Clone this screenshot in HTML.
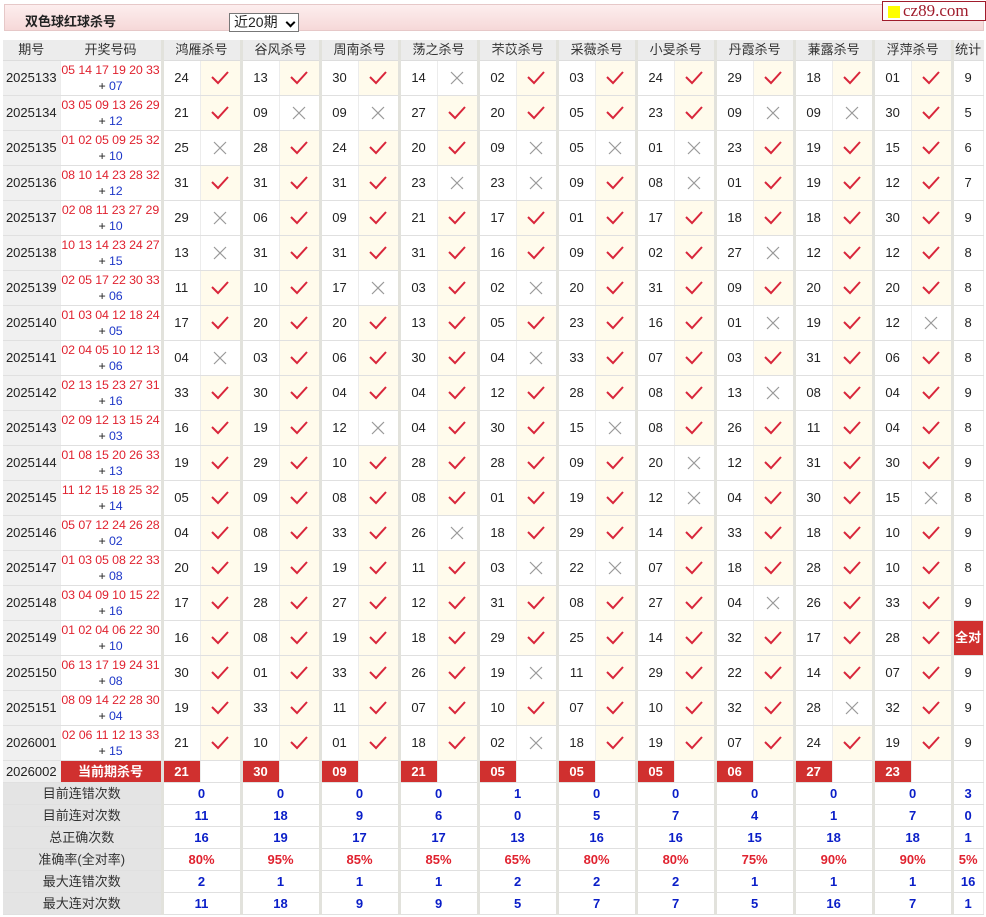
<!DOCTYPE html>
<html><head><meta charset="utf-8">
<style>
body{margin:0;background:#fff;font-family:"Liberation Sans","Noto Sans CJK SC",sans-serif;font-size:13px;color:#222;width:986px;height:917px;overflow:hidden;position:relative}
.bar{position:absolute;left:4px;top:4px;width:980px;height:27px;background:linear-gradient(#fdeeee,#f6d8d8);border:1px solid #e6c8c8;box-sizing:border-box}
.bar b{position:absolute;left:20px;top:6px;font-size:13px}
.sel{position:absolute;left:224px;top:8px;width:70px;height:19px;border:1px solid #777;background:#fff;box-sizing:border-box;font-size:14px;line-height:17px;padding-left:4px}
.sel i{position:absolute;right:4px;top:5px;width:5px;height:5px;border-right:2px solid #000;border-bottom:2px solid #000;transform:rotate(45deg)}
.logo{position:absolute;left:882px;top:1px;width:104px;height:20px;border:1px solid #a01c2c;box-sizing:border-box;background:#fff;font-family:"Liberation Serif",serif;font-size:17px;color:#a01c2c;line-height:18px;padding-left:20px}
.logo i{position:absolute;left:5px;top:4px;width:12px;height:12px;background:#ffff00}
table{position:absolute;left:3px;top:40px;border-collapse:collapse;table-layout:fixed;width:980px}
td{padding:0;text-align:center;border-bottom:1px solid #e0e0e0;border-right:1px solid #ececec;height:34px;line-height:16px;overflow:hidden;white-space:nowrap}
tr.h td{height:20px;background:#ececec;color:#333;border-bottom:1px solid #ddd}
td.n{border-left:3px solid #e2e2dc}
td.q{background:#f0f0f0}
td.k{color:#e0222f;font-size:12.4px;letter-spacing:-0.1px}
td.k span{color:#1c36c8}
td.y{background:#fffbec}
svg{display:block;margin:auto}
tr.c td{height:21px;font-weight:bold}
td.r{background:#d0302f;color:#fff;font-weight:bold}
tr.s td{height:21px;font-weight:bold;color:#0a1ec8}
tr.s td.l{background:#e4e4e4;color:#333;font-weight:normal}
tr.s td.p{color:#e0222f}
td.all{background:#d0302f;color:#fff;font-weight:bold}
</style></head><body>
<svg width="0" height="0" style="position:absolute"><defs>
<symbol id="c" viewBox="0 0 18 14"><path d="M1 6 L7 12 L17 1" fill="none" stroke="#d9263b" stroke-width="2"/></symbol>
<symbol id="x" viewBox="0 0 14 14"><path d="M1 1 L13 13 M13 1 L1 13" fill="none" stroke="#999" stroke-width="1.2"/></symbol>
</defs></svg>
<div class="bar"><b>双色球红球杀号</b><div class="sel">近20期<i></i></div></div>
<div class="logo"><i></i>cz89.com</div>
<table>
<colgroup><col style="width:57px"><col style="width:102px">
<col style="width:38px"><col style="width:41px"><col style="width:38px"><col style="width:41px"><col style="width:38px"><col style="width:41px"><col style="width:38px"><col style="width:41px"><col style="width:38px"><col style="width:41px"><col style="width:38px"><col style="width:41px"><col style="width:38px"><col style="width:41px"><col style="width:38px"><col style="width:41px"><col style="width:38px"><col style="width:41px"><col style="width:38px"><col style="width:41px"><col style="width:31px"></colgroup>
<tr class="h"><td>期号</td><td>开奖号码</td><td class="n" colspan="2">鸿雁杀号</td><td class="n" colspan="2">谷风杀号</td><td class="n" colspan="2">周南杀号</td><td class="n" colspan="2">荡之杀号</td><td class="n" colspan="2">芣苡杀号</td><td class="n" colspan="2">采薇杀号</td><td class="n" colspan="2">小旻杀号</td><td class="n" colspan="2">丹霞杀号</td><td class="n" colspan="2">蒹露杀号</td><td class="n" colspan="2">浮萍杀号</td><td class="n">统计</td></tr>
<tr><td class="q">2025133</td><td class="k">05 14 17 19 20 33<br><span style="color:#222">+</span> <span>07</span></td><td class="n">24</td><td class="y"><svg width="18" height="14"><use href="#c"/></svg></td><td class="n">13</td><td class="y"><svg width="18" height="14"><use href="#c"/></svg></td><td class="n">30</td><td class="y"><svg width="18" height="14"><use href="#c"/></svg></td><td class="n">14</td><td><svg width="14" height="14"><use href="#x"/></svg></td><td class="n">02</td><td class="y"><svg width="18" height="14"><use href="#c"/></svg></td><td class="n">03</td><td class="y"><svg width="18" height="14"><use href="#c"/></svg></td><td class="n">24</td><td class="y"><svg width="18" height="14"><use href="#c"/></svg></td><td class="n">29</td><td class="y"><svg width="18" height="14"><use href="#c"/></svg></td><td class="n">18</td><td class="y"><svg width="18" height="14"><use href="#c"/></svg></td><td class="n">01</td><td class="y"><svg width="18" height="14"><use href="#c"/></svg></td><td class="n">9</td></tr>
<tr><td class="q">2025134</td><td class="k">03 05 09 13 26 29<br><span style="color:#222">+</span> <span>12</span></td><td class="n">21</td><td class="y"><svg width="18" height="14"><use href="#c"/></svg></td><td class="n">09</td><td><svg width="14" height="14"><use href="#x"/></svg></td><td class="n">09</td><td><svg width="14" height="14"><use href="#x"/></svg></td><td class="n">27</td><td class="y"><svg width="18" height="14"><use href="#c"/></svg></td><td class="n">20</td><td class="y"><svg width="18" height="14"><use href="#c"/></svg></td><td class="n">05</td><td class="y"><svg width="18" height="14"><use href="#c"/></svg></td><td class="n">23</td><td class="y"><svg width="18" height="14"><use href="#c"/></svg></td><td class="n">09</td><td><svg width="14" height="14"><use href="#x"/></svg></td><td class="n">09</td><td><svg width="14" height="14"><use href="#x"/></svg></td><td class="n">30</td><td class="y"><svg width="18" height="14"><use href="#c"/></svg></td><td class="n">5</td></tr>
<tr><td class="q">2025135</td><td class="k">01 02 05 09 25 32<br><span style="color:#222">+</span> <span>10</span></td><td class="n">25</td><td><svg width="14" height="14"><use href="#x"/></svg></td><td class="n">28</td><td class="y"><svg width="18" height="14"><use href="#c"/></svg></td><td class="n">24</td><td class="y"><svg width="18" height="14"><use href="#c"/></svg></td><td class="n">20</td><td class="y"><svg width="18" height="14"><use href="#c"/></svg></td><td class="n">09</td><td><svg width="14" height="14"><use href="#x"/></svg></td><td class="n">05</td><td><svg width="14" height="14"><use href="#x"/></svg></td><td class="n">01</td><td><svg width="14" height="14"><use href="#x"/></svg></td><td class="n">23</td><td class="y"><svg width="18" height="14"><use href="#c"/></svg></td><td class="n">19</td><td class="y"><svg width="18" height="14"><use href="#c"/></svg></td><td class="n">15</td><td class="y"><svg width="18" height="14"><use href="#c"/></svg></td><td class="n">6</td></tr>
<tr><td class="q">2025136</td><td class="k">08 10 14 23 28 32<br><span style="color:#222">+</span> <span>12</span></td><td class="n">31</td><td class="y"><svg width="18" height="14"><use href="#c"/></svg></td><td class="n">31</td><td class="y"><svg width="18" height="14"><use href="#c"/></svg></td><td class="n">31</td><td class="y"><svg width="18" height="14"><use href="#c"/></svg></td><td class="n">23</td><td><svg width="14" height="14"><use href="#x"/></svg></td><td class="n">23</td><td><svg width="14" height="14"><use href="#x"/></svg></td><td class="n">09</td><td class="y"><svg width="18" height="14"><use href="#c"/></svg></td><td class="n">08</td><td><svg width="14" height="14"><use href="#x"/></svg></td><td class="n">01</td><td class="y"><svg width="18" height="14"><use href="#c"/></svg></td><td class="n">19</td><td class="y"><svg width="18" height="14"><use href="#c"/></svg></td><td class="n">12</td><td class="y"><svg width="18" height="14"><use href="#c"/></svg></td><td class="n">7</td></tr>
<tr><td class="q">2025137</td><td class="k">02 08 11 23 27 29<br><span style="color:#222">+</span> <span>10</span></td><td class="n">29</td><td><svg width="14" height="14"><use href="#x"/></svg></td><td class="n">06</td><td class="y"><svg width="18" height="14"><use href="#c"/></svg></td><td class="n">09</td><td class="y"><svg width="18" height="14"><use href="#c"/></svg></td><td class="n">21</td><td class="y"><svg width="18" height="14"><use href="#c"/></svg></td><td class="n">17</td><td class="y"><svg width="18" height="14"><use href="#c"/></svg></td><td class="n">01</td><td class="y"><svg width="18" height="14"><use href="#c"/></svg></td><td class="n">17</td><td class="y"><svg width="18" height="14"><use href="#c"/></svg></td><td class="n">18</td><td class="y"><svg width="18" height="14"><use href="#c"/></svg></td><td class="n">18</td><td class="y"><svg width="18" height="14"><use href="#c"/></svg></td><td class="n">30</td><td class="y"><svg width="18" height="14"><use href="#c"/></svg></td><td class="n">9</td></tr>
<tr><td class="q">2025138</td><td class="k">10 13 14 23 24 27<br><span style="color:#222">+</span> <span>15</span></td><td class="n">13</td><td><svg width="14" height="14"><use href="#x"/></svg></td><td class="n">31</td><td class="y"><svg width="18" height="14"><use href="#c"/></svg></td><td class="n">31</td><td class="y"><svg width="18" height="14"><use href="#c"/></svg></td><td class="n">31</td><td class="y"><svg width="18" height="14"><use href="#c"/></svg></td><td class="n">16</td><td class="y"><svg width="18" height="14"><use href="#c"/></svg></td><td class="n">09</td><td class="y"><svg width="18" height="14"><use href="#c"/></svg></td><td class="n">02</td><td class="y"><svg width="18" height="14"><use href="#c"/></svg></td><td class="n">27</td><td><svg width="14" height="14"><use href="#x"/></svg></td><td class="n">12</td><td class="y"><svg width="18" height="14"><use href="#c"/></svg></td><td class="n">12</td><td class="y"><svg width="18" height="14"><use href="#c"/></svg></td><td class="n">8</td></tr>
<tr><td class="q">2025139</td><td class="k">02 05 17 22 30 33<br><span style="color:#222">+</span> <span>06</span></td><td class="n">11</td><td class="y"><svg width="18" height="14"><use href="#c"/></svg></td><td class="n">10</td><td class="y"><svg width="18" height="14"><use href="#c"/></svg></td><td class="n">17</td><td><svg width="14" height="14"><use href="#x"/></svg></td><td class="n">03</td><td class="y"><svg width="18" height="14"><use href="#c"/></svg></td><td class="n">02</td><td><svg width="14" height="14"><use href="#x"/></svg></td><td class="n">20</td><td class="y"><svg width="18" height="14"><use href="#c"/></svg></td><td class="n">31</td><td class="y"><svg width="18" height="14"><use href="#c"/></svg></td><td class="n">09</td><td class="y"><svg width="18" height="14"><use href="#c"/></svg></td><td class="n">20</td><td class="y"><svg width="18" height="14"><use href="#c"/></svg></td><td class="n">20</td><td class="y"><svg width="18" height="14"><use href="#c"/></svg></td><td class="n">8</td></tr>
<tr><td class="q">2025140</td><td class="k">01 03 04 12 18 24<br><span style="color:#222">+</span> <span>05</span></td><td class="n">17</td><td class="y"><svg width="18" height="14"><use href="#c"/></svg></td><td class="n">20</td><td class="y"><svg width="18" height="14"><use href="#c"/></svg></td><td class="n">20</td><td class="y"><svg width="18" height="14"><use href="#c"/></svg></td><td class="n">13</td><td class="y"><svg width="18" height="14"><use href="#c"/></svg></td><td class="n">05</td><td class="y"><svg width="18" height="14"><use href="#c"/></svg></td><td class="n">23</td><td class="y"><svg width="18" height="14"><use href="#c"/></svg></td><td class="n">16</td><td class="y"><svg width="18" height="14"><use href="#c"/></svg></td><td class="n">01</td><td><svg width="14" height="14"><use href="#x"/></svg></td><td class="n">19</td><td class="y"><svg width="18" height="14"><use href="#c"/></svg></td><td class="n">12</td><td><svg width="14" height="14"><use href="#x"/></svg></td><td class="n">8</td></tr>
<tr><td class="q">2025141</td><td class="k">02 04 05 10 12 13<br><span style="color:#222">+</span> <span>06</span></td><td class="n">04</td><td><svg width="14" height="14"><use href="#x"/></svg></td><td class="n">03</td><td class="y"><svg width="18" height="14"><use href="#c"/></svg></td><td class="n">06</td><td class="y"><svg width="18" height="14"><use href="#c"/></svg></td><td class="n">30</td><td class="y"><svg width="18" height="14"><use href="#c"/></svg></td><td class="n">04</td><td><svg width="14" height="14"><use href="#x"/></svg></td><td class="n">33</td><td class="y"><svg width="18" height="14"><use href="#c"/></svg></td><td class="n">07</td><td class="y"><svg width="18" height="14"><use href="#c"/></svg></td><td class="n">03</td><td class="y"><svg width="18" height="14"><use href="#c"/></svg></td><td class="n">31</td><td class="y"><svg width="18" height="14"><use href="#c"/></svg></td><td class="n">06</td><td class="y"><svg width="18" height="14"><use href="#c"/></svg></td><td class="n">8</td></tr>
<tr><td class="q">2025142</td><td class="k">02 13 15 23 27 31<br><span style="color:#222">+</span> <span>16</span></td><td class="n">33</td><td class="y"><svg width="18" height="14"><use href="#c"/></svg></td><td class="n">30</td><td class="y"><svg width="18" height="14"><use href="#c"/></svg></td><td class="n">04</td><td class="y"><svg width="18" height="14"><use href="#c"/></svg></td><td class="n">04</td><td class="y"><svg width="18" height="14"><use href="#c"/></svg></td><td class="n">12</td><td class="y"><svg width="18" height="14"><use href="#c"/></svg></td><td class="n">28</td><td class="y"><svg width="18" height="14"><use href="#c"/></svg></td><td class="n">08</td><td class="y"><svg width="18" height="14"><use href="#c"/></svg></td><td class="n">13</td><td><svg width="14" height="14"><use href="#x"/></svg></td><td class="n">08</td><td class="y"><svg width="18" height="14"><use href="#c"/></svg></td><td class="n">04</td><td class="y"><svg width="18" height="14"><use href="#c"/></svg></td><td class="n">9</td></tr>
<tr><td class="q">2025143</td><td class="k">02 09 12 13 15 24<br><span style="color:#222">+</span> <span>03</span></td><td class="n">16</td><td class="y"><svg width="18" height="14"><use href="#c"/></svg></td><td class="n">19</td><td class="y"><svg width="18" height="14"><use href="#c"/></svg></td><td class="n">12</td><td><svg width="14" height="14"><use href="#x"/></svg></td><td class="n">04</td><td class="y"><svg width="18" height="14"><use href="#c"/></svg></td><td class="n">30</td><td class="y"><svg width="18" height="14"><use href="#c"/></svg></td><td class="n">15</td><td><svg width="14" height="14"><use href="#x"/></svg></td><td class="n">08</td><td class="y"><svg width="18" height="14"><use href="#c"/></svg></td><td class="n">26</td><td class="y"><svg width="18" height="14"><use href="#c"/></svg></td><td class="n">11</td><td class="y"><svg width="18" height="14"><use href="#c"/></svg></td><td class="n">04</td><td class="y"><svg width="18" height="14"><use href="#c"/></svg></td><td class="n">8</td></tr>
<tr><td class="q">2025144</td><td class="k">01 08 15 20 26 33<br><span style="color:#222">+</span> <span>13</span></td><td class="n">19</td><td class="y"><svg width="18" height="14"><use href="#c"/></svg></td><td class="n">29</td><td class="y"><svg width="18" height="14"><use href="#c"/></svg></td><td class="n">10</td><td class="y"><svg width="18" height="14"><use href="#c"/></svg></td><td class="n">28</td><td class="y"><svg width="18" height="14"><use href="#c"/></svg></td><td class="n">28</td><td class="y"><svg width="18" height="14"><use href="#c"/></svg></td><td class="n">09</td><td class="y"><svg width="18" height="14"><use href="#c"/></svg></td><td class="n">20</td><td><svg width="14" height="14"><use href="#x"/></svg></td><td class="n">12</td><td class="y"><svg width="18" height="14"><use href="#c"/></svg></td><td class="n">31</td><td class="y"><svg width="18" height="14"><use href="#c"/></svg></td><td class="n">30</td><td class="y"><svg width="18" height="14"><use href="#c"/></svg></td><td class="n">9</td></tr>
<tr><td class="q">2025145</td><td class="k">11 12 15 18 25 32<br><span style="color:#222">+</span> <span>14</span></td><td class="n">05</td><td class="y"><svg width="18" height="14"><use href="#c"/></svg></td><td class="n">09</td><td class="y"><svg width="18" height="14"><use href="#c"/></svg></td><td class="n">08</td><td class="y"><svg width="18" height="14"><use href="#c"/></svg></td><td class="n">08</td><td class="y"><svg width="18" height="14"><use href="#c"/></svg></td><td class="n">01</td><td class="y"><svg width="18" height="14"><use href="#c"/></svg></td><td class="n">19</td><td class="y"><svg width="18" height="14"><use href="#c"/></svg></td><td class="n">12</td><td><svg width="14" height="14"><use href="#x"/></svg></td><td class="n">04</td><td class="y"><svg width="18" height="14"><use href="#c"/></svg></td><td class="n">30</td><td class="y"><svg width="18" height="14"><use href="#c"/></svg></td><td class="n">15</td><td><svg width="14" height="14"><use href="#x"/></svg></td><td class="n">8</td></tr>
<tr><td class="q">2025146</td><td class="k">05 07 12 24 26 28<br><span style="color:#222">+</span> <span>02</span></td><td class="n">04</td><td class="y"><svg width="18" height="14"><use href="#c"/></svg></td><td class="n">08</td><td class="y"><svg width="18" height="14"><use href="#c"/></svg></td><td class="n">33</td><td class="y"><svg width="18" height="14"><use href="#c"/></svg></td><td class="n">26</td><td><svg width="14" height="14"><use href="#x"/></svg></td><td class="n">18</td><td class="y"><svg width="18" height="14"><use href="#c"/></svg></td><td class="n">29</td><td class="y"><svg width="18" height="14"><use href="#c"/></svg></td><td class="n">14</td><td class="y"><svg width="18" height="14"><use href="#c"/></svg></td><td class="n">33</td><td class="y"><svg width="18" height="14"><use href="#c"/></svg></td><td class="n">18</td><td class="y"><svg width="18" height="14"><use href="#c"/></svg></td><td class="n">10</td><td class="y"><svg width="18" height="14"><use href="#c"/></svg></td><td class="n">9</td></tr>
<tr><td class="q">2025147</td><td class="k">01 03 05 08 22 33<br><span style="color:#222">+</span> <span>08</span></td><td class="n">20</td><td class="y"><svg width="18" height="14"><use href="#c"/></svg></td><td class="n">19</td><td class="y"><svg width="18" height="14"><use href="#c"/></svg></td><td class="n">19</td><td class="y"><svg width="18" height="14"><use href="#c"/></svg></td><td class="n">11</td><td class="y"><svg width="18" height="14"><use href="#c"/></svg></td><td class="n">03</td><td><svg width="14" height="14"><use href="#x"/></svg></td><td class="n">22</td><td><svg width="14" height="14"><use href="#x"/></svg></td><td class="n">07</td><td class="y"><svg width="18" height="14"><use href="#c"/></svg></td><td class="n">18</td><td class="y"><svg width="18" height="14"><use href="#c"/></svg></td><td class="n">28</td><td class="y"><svg width="18" height="14"><use href="#c"/></svg></td><td class="n">10</td><td class="y"><svg width="18" height="14"><use href="#c"/></svg></td><td class="n">8</td></tr>
<tr><td class="q">2025148</td><td class="k">03 04 09 10 15 22<br><span style="color:#222">+</span> <span>16</span></td><td class="n">17</td><td class="y"><svg width="18" height="14"><use href="#c"/></svg></td><td class="n">28</td><td class="y"><svg width="18" height="14"><use href="#c"/></svg></td><td class="n">27</td><td class="y"><svg width="18" height="14"><use href="#c"/></svg></td><td class="n">12</td><td class="y"><svg width="18" height="14"><use href="#c"/></svg></td><td class="n">31</td><td class="y"><svg width="18" height="14"><use href="#c"/></svg></td><td class="n">08</td><td class="y"><svg width="18" height="14"><use href="#c"/></svg></td><td class="n">27</td><td class="y"><svg width="18" height="14"><use href="#c"/></svg></td><td class="n">04</td><td><svg width="14" height="14"><use href="#x"/></svg></td><td class="n">26</td><td class="y"><svg width="18" height="14"><use href="#c"/></svg></td><td class="n">33</td><td class="y"><svg width="18" height="14"><use href="#c"/></svg></td><td class="n">9</td></tr>
<tr><td class="q">2025149</td><td class="k">01 02 04 06 22 30<br><span style="color:#222">+</span> <span>10</span></td><td class="n">16</td><td class="y"><svg width="18" height="14"><use href="#c"/></svg></td><td class="n">08</td><td class="y"><svg width="18" height="14"><use href="#c"/></svg></td><td class="n">19</td><td class="y"><svg width="18" height="14"><use href="#c"/></svg></td><td class="n">18</td><td class="y"><svg width="18" height="14"><use href="#c"/></svg></td><td class="n">29</td><td class="y"><svg width="18" height="14"><use href="#c"/></svg></td><td class="n">25</td><td class="y"><svg width="18" height="14"><use href="#c"/></svg></td><td class="n">14</td><td class="y"><svg width="18" height="14"><use href="#c"/></svg></td><td class="n">32</td><td class="y"><svg width="18" height="14"><use href="#c"/></svg></td><td class="n">17</td><td class="y"><svg width="18" height="14"><use href="#c"/></svg></td><td class="n">28</td><td class="y"><svg width="18" height="14"><use href="#c"/></svg></td><td class="n all">全对</td></tr>
<tr><td class="q">2025150</td><td class="k">06 13 17 19 24 31<br><span style="color:#222">+</span> <span>08</span></td><td class="n">30</td><td class="y"><svg width="18" height="14"><use href="#c"/></svg></td><td class="n">01</td><td class="y"><svg width="18" height="14"><use href="#c"/></svg></td><td class="n">33</td><td class="y"><svg width="18" height="14"><use href="#c"/></svg></td><td class="n">26</td><td class="y"><svg width="18" height="14"><use href="#c"/></svg></td><td class="n">19</td><td><svg width="14" height="14"><use href="#x"/></svg></td><td class="n">11</td><td class="y"><svg width="18" height="14"><use href="#c"/></svg></td><td class="n">29</td><td class="y"><svg width="18" height="14"><use href="#c"/></svg></td><td class="n">22</td><td class="y"><svg width="18" height="14"><use href="#c"/></svg></td><td class="n">14</td><td class="y"><svg width="18" height="14"><use href="#c"/></svg></td><td class="n">07</td><td class="y"><svg width="18" height="14"><use href="#c"/></svg></td><td class="n">9</td></tr>
<tr><td class="q">2025151</td><td class="k">08 09 14 22 28 30<br><span style="color:#222">+</span> <span>04</span></td><td class="n">19</td><td class="y"><svg width="18" height="14"><use href="#c"/></svg></td><td class="n">33</td><td class="y"><svg width="18" height="14"><use href="#c"/></svg></td><td class="n">11</td><td class="y"><svg width="18" height="14"><use href="#c"/></svg></td><td class="n">07</td><td class="y"><svg width="18" height="14"><use href="#c"/></svg></td><td class="n">10</td><td class="y"><svg width="18" height="14"><use href="#c"/></svg></td><td class="n">07</td><td class="y"><svg width="18" height="14"><use href="#c"/></svg></td><td class="n">10</td><td class="y"><svg width="18" height="14"><use href="#c"/></svg></td><td class="n">32</td><td class="y"><svg width="18" height="14"><use href="#c"/></svg></td><td class="n">28</td><td><svg width="14" height="14"><use href="#x"/></svg></td><td class="n">32</td><td class="y"><svg width="18" height="14"><use href="#c"/></svg></td><td class="n">9</td></tr>
<tr><td class="q">2026001</td><td class="k">02 06 11 12 13 33<br><span style="color:#222">+</span> <span>15</span></td><td class="n">21</td><td class="y"><svg width="18" height="14"><use href="#c"/></svg></td><td class="n">10</td><td class="y"><svg width="18" height="14"><use href="#c"/></svg></td><td class="n">01</td><td class="y"><svg width="18" height="14"><use href="#c"/></svg></td><td class="n">18</td><td class="y"><svg width="18" height="14"><use href="#c"/></svg></td><td class="n">02</td><td><svg width="14" height="14"><use href="#x"/></svg></td><td class="n">18</td><td class="y"><svg width="18" height="14"><use href="#c"/></svg></td><td class="n">19</td><td class="y"><svg width="18" height="14"><use href="#c"/></svg></td><td class="n">07</td><td class="y"><svg width="18" height="14"><use href="#c"/></svg></td><td class="n">24</td><td class="y"><svg width="18" height="14"><use href="#c"/></svg></td><td class="n">19</td><td class="y"><svg width="18" height="14"><use href="#c"/></svg></td><td class="n">9</td></tr>
<tr class="c"><td class="q" style="font-weight:normal">2026002</td><td class="r">当前期杀号</td><td class="n r">21</td><td></td><td class="n r">30</td><td></td><td class="n r">09</td><td></td><td class="n r">21</td><td></td><td class="n r">05</td><td></td><td class="n r">05</td><td></td><td class="n r">05</td><td></td><td class="n r">06</td><td></td><td class="n r">27</td><td></td><td class="n r">23</td><td></td><td class="n"></td></tr>
<tr class="s"><td class="l" colspan="2">目前连错次数</td><td class="n" colspan="2">0</td><td class="n" colspan="2">0</td><td class="n" colspan="2">0</td><td class="n" colspan="2">0</td><td class="n" colspan="2">1</td><td class="n" colspan="2">0</td><td class="n" colspan="2">0</td><td class="n" colspan="2">0</td><td class="n" colspan="2">0</td><td class="n" colspan="2">0</td><td class="n">3</td></tr>
<tr class="s"><td class="l" colspan="2">目前连对次数</td><td class="n" colspan="2">11</td><td class="n" colspan="2">18</td><td class="n" colspan="2">9</td><td class="n" colspan="2">6</td><td class="n" colspan="2">0</td><td class="n" colspan="2">5</td><td class="n" colspan="2">7</td><td class="n" colspan="2">4</td><td class="n" colspan="2">1</td><td class="n" colspan="2">7</td><td class="n">0</td></tr>
<tr class="s"><td class="l" colspan="2">总正确次数</td><td class="n" colspan="2">16</td><td class="n" colspan="2">19</td><td class="n" colspan="2">17</td><td class="n" colspan="2">17</td><td class="n" colspan="2">13</td><td class="n" colspan="2">16</td><td class="n" colspan="2">16</td><td class="n" colspan="2">15</td><td class="n" colspan="2">18</td><td class="n" colspan="2">18</td><td class="n">1</td></tr>
<tr class="s"><td class="l" colspan="2">准确率(全对率)</td><td class="n p" colspan="2">80%</td><td class="n p" colspan="2">95%</td><td class="n p" colspan="2">85%</td><td class="n p" colspan="2">85%</td><td class="n p" colspan="2">65%</td><td class="n p" colspan="2">80%</td><td class="n p" colspan="2">80%</td><td class="n p" colspan="2">75%</td><td class="n p" colspan="2">90%</td><td class="n p" colspan="2">90%</td><td class="n p">5%</td></tr>
<tr class="s"><td class="l" colspan="2">最大连错次数</td><td class="n" colspan="2">2</td><td class="n" colspan="2">1</td><td class="n" colspan="2">1</td><td class="n" colspan="2">1</td><td class="n" colspan="2">2</td><td class="n" colspan="2">2</td><td class="n" colspan="2">2</td><td class="n" colspan="2">1</td><td class="n" colspan="2">1</td><td class="n" colspan="2">1</td><td class="n">16</td></tr>
<tr class="s"><td class="l" colspan="2">最大连对次数</td><td class="n" colspan="2">11</td><td class="n" colspan="2">18</td><td class="n" colspan="2">9</td><td class="n" colspan="2">9</td><td class="n" colspan="2">5</td><td class="n" colspan="2">7</td><td class="n" colspan="2">7</td><td class="n" colspan="2">5</td><td class="n" colspan="2">16</td><td class="n" colspan="2">7</td><td class="n">1</td></tr>
</table>
</body></html>
